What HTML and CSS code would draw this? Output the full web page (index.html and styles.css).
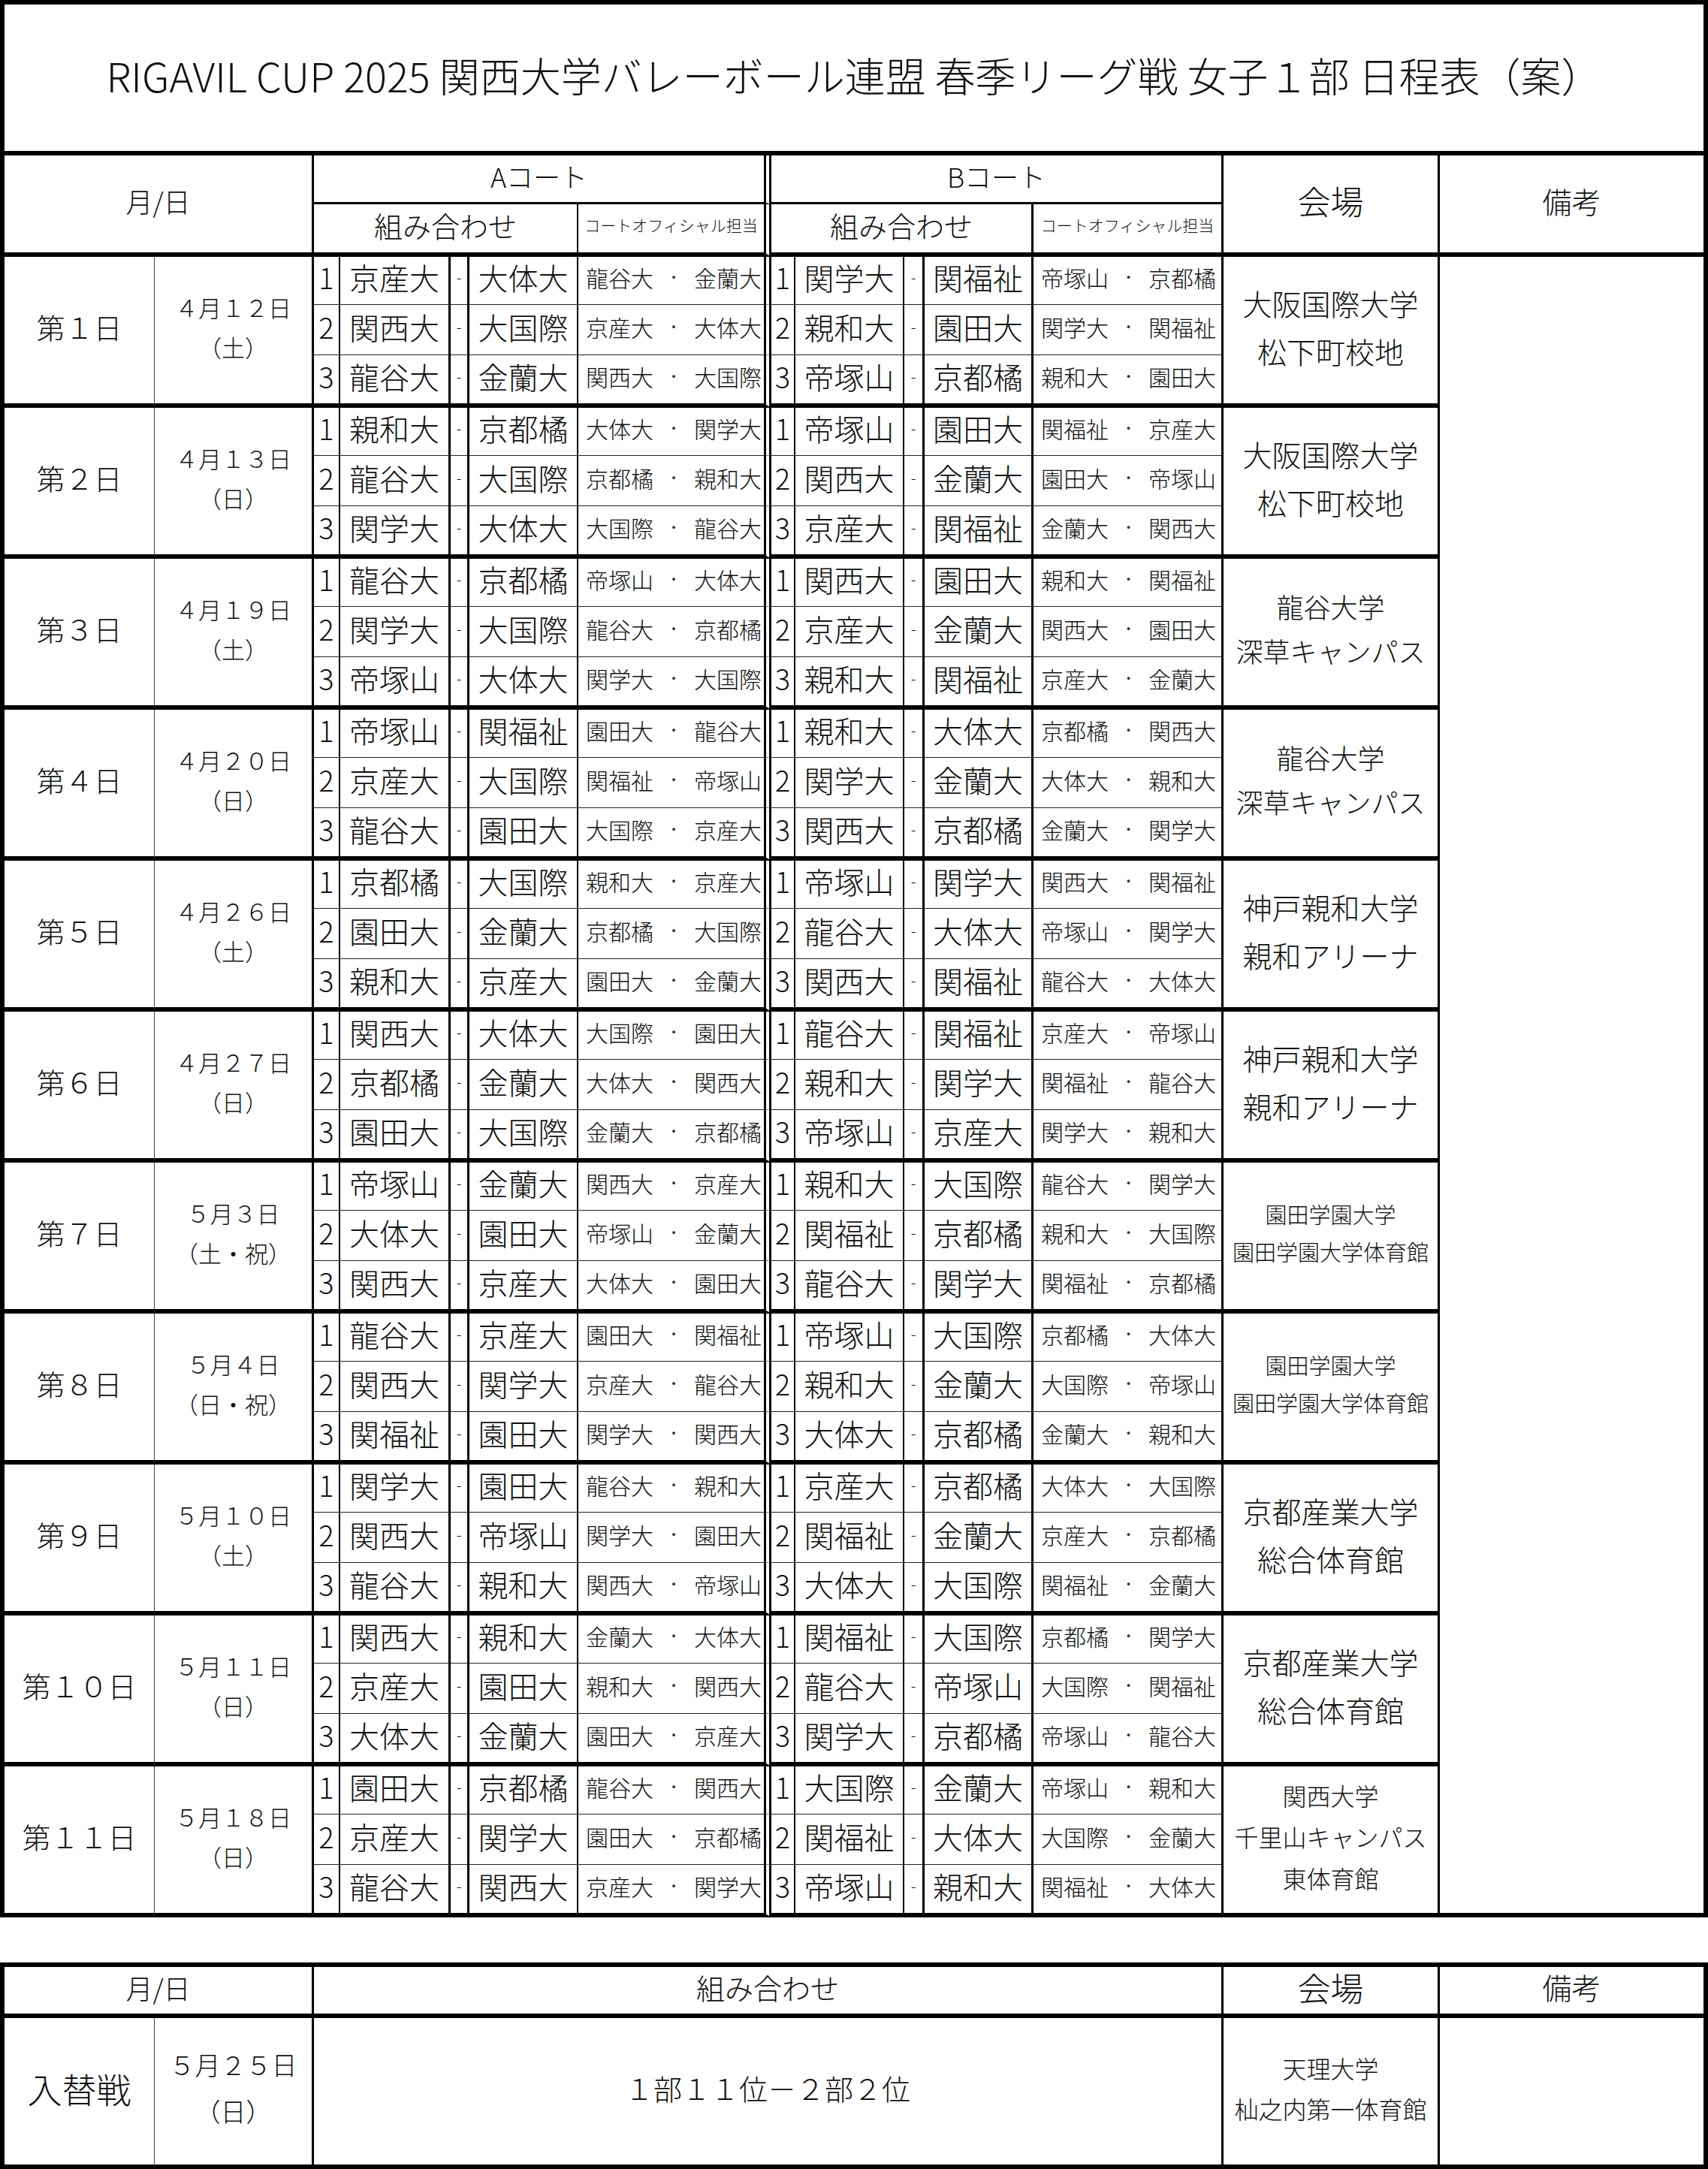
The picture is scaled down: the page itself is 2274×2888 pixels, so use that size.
FILE: index.html
```html
<!DOCTYPE html>
<html lang="ja">
<head>
<meta charset="utf-8">
<title>RIGAVIL CUP 2025 日程表</title>
<link rel="stylesheet" href="styles.css">
</head>
<body>
<div class="page">
  <div class="sheet">
    <div class="title">RIGAVIL CUP 2025 関西大学バレーボール連盟 春季リーグ戦 女子１部 日程表（案）</div>
    <div class="grid">
      <div class="h-date">月/日</div>
      <div class="h-a">Aコート</div>
      <div class="h-b">Bコート</div>
      <div class="h-venue">会場</div>
      <div class="h-note">備考</div>
      <div class="h-ca">組み合わせ</div>
      <div class="h-oa">コートオフィシャル担当</div>
      <div class="h-cb">組み合わせ</div>
      <div class="h-ob">コートオフィシャル担当</div>

      <div class="day">
        <div class="lbl">第１日</div>
        <div class="date">４月１２日<br>（土）</div>
        <div class="m"><span>1</span><span>京産大</span><span>-</span><span>大体大</span><span class="o"><span>龍谷大</span><span class="dot">・</span><span>金蘭大</span></span><span>1</span><span>関学大</span><span>-</span><span>関福祉</span><span class="o"><span>帝塚山</span><span class="dot">・</span><span>京都橘</span></span></div>
        <div class="venue">大阪国際大学<br>松下町校地</div>
        <div class="note"></div>
        <div class="m"><span>2</span><span>関西大</span><span>-</span><span>大国際</span><span class="o"><span>京産大</span><span class="dot">・</span><span>大体大</span></span><span>2</span><span>親和大</span><span>-</span><span>園田大</span><span class="o"><span>関学大</span><span class="dot">・</span><span>関福祉</span></span></div>
        <div class="m z"><span>3</span><span>龍谷大</span><span>-</span><span>金蘭大</span><span class="o"><span>関西大</span><span class="dot">・</span><span>大国際</span></span><span>3</span><span>帝塚山</span><span>-</span><span>京都橘</span><span class="o"><span>親和大</span><span class="dot">・</span><span>園田大</span></span></div>
      </div>

      <div class="day">
        <div class="lbl">第２日</div>
        <div class="date">４月１３日<br>（日）</div>
        <div class="m"><span>1</span><span>親和大</span><span>-</span><span>京都橘</span><span class="o"><span>大体大</span><span class="dot">・</span><span>関学大</span></span><span>1</span><span>帝塚山</span><span>-</span><span>園田大</span><span class="o"><span>関福祉</span><span class="dot">・</span><span>京産大</span></span></div>
        <div class="venue">大阪国際大学<br>松下町校地</div>
        <div class="m"><span>2</span><span>龍谷大</span><span>-</span><span>大国際</span><span class="o"><span>京都橘</span><span class="dot">・</span><span>親和大</span></span><span>2</span><span>関西大</span><span>-</span><span>金蘭大</span><span class="o"><span>園田大</span><span class="dot">・</span><span>帝塚山</span></span></div>
        <div class="m z"><span>3</span><span>関学大</span><span>-</span><span>大体大</span><span class="o"><span>大国際</span><span class="dot">・</span><span>龍谷大</span></span><span>3</span><span>京産大</span><span>-</span><span>関福祉</span><span class="o"><span>金蘭大</span><span class="dot">・</span><span>関西大</span></span></div>
      </div>

      <div class="day">
        <div class="lbl">第３日</div>
        <div class="date">４月１９日<br>（土）</div>
        <div class="m"><span>1</span><span>龍谷大</span><span>-</span><span>京都橘</span><span class="o"><span>帝塚山</span><span class="dot">・</span><span>大体大</span></span><span>1</span><span>関西大</span><span>-</span><span>園田大</span><span class="o"><span>親和大</span><span class="dot">・</span><span>関福祉</span></span></div>
        <div class="venue sm">龍谷大学<br>深草キャンパス</div>
        <div class="m"><span>2</span><span>関学大</span><span>-</span><span>大国際</span><span class="o"><span>龍谷大</span><span class="dot">・</span><span>京都橘</span></span><span>2</span><span>京産大</span><span>-</span><span>金蘭大</span><span class="o"><span>関西大</span><span class="dot">・</span><span>園田大</span></span></div>
        <div class="m z"><span>3</span><span>帝塚山</span><span>-</span><span>大体大</span><span class="o"><span>関学大</span><span class="dot">・</span><span>大国際</span></span><span>3</span><span>親和大</span><span>-</span><span>関福祉</span><span class="o"><span>京産大</span><span class="dot">・</span><span>金蘭大</span></span></div>
      </div>

      <div class="day">
        <div class="lbl">第４日</div>
        <div class="date">４月２０日<br>（日）</div>
        <div class="m"><span>1</span><span>帝塚山</span><span>-</span><span>関福祉</span><span class="o"><span>園田大</span><span class="dot">・</span><span>龍谷大</span></span><span>1</span><span>親和大</span><span>-</span><span>大体大</span><span class="o"><span>京都橘</span><span class="dot">・</span><span>関西大</span></span></div>
        <div class="venue sm">龍谷大学<br>深草キャンパス</div>
        <div class="m"><span>2</span><span>京産大</span><span>-</span><span>大国際</span><span class="o"><span>関福祉</span><span class="dot">・</span><span>帝塚山</span></span><span>2</span><span>関学大</span><span>-</span><span>金蘭大</span><span class="o"><span>大体大</span><span class="dot">・</span><span>親和大</span></span></div>
        <div class="m z"><span>3</span><span>龍谷大</span><span>-</span><span>園田大</span><span class="o"><span>大国際</span><span class="dot">・</span><span>京産大</span></span><span>3</span><span>関西大</span><span>-</span><span>京都橘</span><span class="o"><span>金蘭大</span><span class="dot">・</span><span>関学大</span></span></div>
      </div>

      <div class="day">
        <div class="lbl">第５日</div>
        <div class="date">４月２６日<br>（土）</div>
        <div class="m"><span>1</span><span>京都橘</span><span>-</span><span>大国際</span><span class="o"><span>親和大</span><span class="dot">・</span><span>京産大</span></span><span>1</span><span>帝塚山</span><span>-</span><span>関学大</span><span class="o"><span>関西大</span><span class="dot">・</span><span>関福祉</span></span></div>
        <div class="venue">神戸親和大学<br>親和アリーナ</div>
        <div class="m"><span>2</span><span>園田大</span><span>-</span><span>金蘭大</span><span class="o"><span>京都橘</span><span class="dot">・</span><span>大国際</span></span><span>2</span><span>龍谷大</span><span>-</span><span>大体大</span><span class="o"><span>帝塚山</span><span class="dot">・</span><span>関学大</span></span></div>
        <div class="m z"><span>3</span><span>親和大</span><span>-</span><span>京産大</span><span class="o"><span>園田大</span><span class="dot">・</span><span>金蘭大</span></span><span>3</span><span>関西大</span><span>-</span><span>関福祉</span><span class="o"><span>龍谷大</span><span class="dot">・</span><span>大体大</span></span></div>
      </div>

      <div class="day">
        <div class="lbl">第６日</div>
        <div class="date">４月２７日<br>（日）</div>
        <div class="m"><span>1</span><span>関西大</span><span>-</span><span>大体大</span><span class="o"><span>大国際</span><span class="dot">・</span><span>園田大</span></span><span>1</span><span>龍谷大</span><span>-</span><span>関福祉</span><span class="o"><span>京産大</span><span class="dot">・</span><span>帝塚山</span></span></div>
        <div class="venue">神戸親和大学<br>親和アリーナ</div>
        <div class="m"><span>2</span><span>京都橘</span><span>-</span><span>金蘭大</span><span class="o"><span>大体大</span><span class="dot">・</span><span>関西大</span></span><span>2</span><span>親和大</span><span>-</span><span>関学大</span><span class="o"><span>関福祉</span><span class="dot">・</span><span>龍谷大</span></span></div>
        <div class="m z"><span>3</span><span>園田大</span><span>-</span><span>大国際</span><span class="o"><span>金蘭大</span><span class="dot">・</span><span>京都橘</span></span><span>3</span><span>帝塚山</span><span>-</span><span>京産大</span><span class="o"><span>関学大</span><span class="dot">・</span><span>親和大</span></span></div>
      </div>

      <div class="day">
        <div class="lbl">第７日</div>
        <div class="date">５月３日<br>（土・祝）</div>
        <div class="m"><span>1</span><span>帝塚山</span><span>-</span><span>金蘭大</span><span class="o"><span>関西大</span><span class="dot">・</span><span>京産大</span></span><span>1</span><span>親和大</span><span>-</span><span>大国際</span><span class="o"><span>龍谷大</span><span class="dot">・</span><span>関学大</span></span></div>
        <div class="venue xs">園田学園大学<br>園田学園大学体育館</div>
        <div class="m"><span>2</span><span>大体大</span><span>-</span><span>園田大</span><span class="o"><span>帝塚山</span><span class="dot">・</span><span>金蘭大</span></span><span>2</span><span>関福祉</span><span>-</span><span>京都橘</span><span class="o"><span>親和大</span><span class="dot">・</span><span>大国際</span></span></div>
        <div class="m z"><span>3</span><span>関西大</span><span>-</span><span>京産大</span><span class="o"><span>大体大</span><span class="dot">・</span><span>園田大</span></span><span>3</span><span>龍谷大</span><span>-</span><span>関学大</span><span class="o"><span>関福祉</span><span class="dot">・</span><span>京都橘</span></span></div>
      </div>

      <div class="day">
        <div class="lbl">第８日</div>
        <div class="date">５月４日<br>（日・祝）</div>
        <div class="m"><span>1</span><span>龍谷大</span><span>-</span><span>京産大</span><span class="o"><span>園田大</span><span class="dot">・</span><span>関福祉</span></span><span>1</span><span>帝塚山</span><span>-</span><span>大国際</span><span class="o"><span>京都橘</span><span class="dot">・</span><span>大体大</span></span></div>
        <div class="venue xs">園田学園大学<br>園田学園大学体育館</div>
        <div class="m"><span>2</span><span>関西大</span><span>-</span><span>関学大</span><span class="o"><span>京産大</span><span class="dot">・</span><span>龍谷大</span></span><span>2</span><span>親和大</span><span>-</span><span>金蘭大</span><span class="o"><span>大国際</span><span class="dot">・</span><span>帝塚山</span></span></div>
        <div class="m z"><span>3</span><span>関福祉</span><span>-</span><span>園田大</span><span class="o"><span>関学大</span><span class="dot">・</span><span>関西大</span></span><span>3</span><span>大体大</span><span>-</span><span>京都橘</span><span class="o"><span>金蘭大</span><span class="dot">・</span><span>親和大</span></span></div>
      </div>

      <div class="day">
        <div class="lbl">第９日</div>
        <div class="date">５月１０日<br>（土）</div>
        <div class="m"><span>1</span><span>関学大</span><span>-</span><span>園田大</span><span class="o"><span>龍谷大</span><span class="dot">・</span><span>親和大</span></span><span>1</span><span>京産大</span><span>-</span><span>京都橘</span><span class="o"><span>大体大</span><span class="dot">・</span><span>大国際</span></span></div>
        <div class="venue">京都産業大学<br>総合体育館</div>
        <div class="m"><span>2</span><span>関西大</span><span>-</span><span>帝塚山</span><span class="o"><span>関学大</span><span class="dot">・</span><span>園田大</span></span><span>2</span><span>関福祉</span><span>-</span><span>金蘭大</span><span class="o"><span>京産大</span><span class="dot">・</span><span>京都橘</span></span></div>
        <div class="m z"><span>3</span><span>龍谷大</span><span>-</span><span>親和大</span><span class="o"><span>関西大</span><span class="dot">・</span><span>帝塚山</span></span><span>3</span><span>大体大</span><span>-</span><span>大国際</span><span class="o"><span>関福祉</span><span class="dot">・</span><span>金蘭大</span></span></div>
      </div>

      <div class="day">
        <div class="lbl">第１０日</div>
        <div class="date">５月１１日<br>（日）</div>
        <div class="m"><span>1</span><span>関西大</span><span>-</span><span>親和大</span><span class="o"><span>金蘭大</span><span class="dot">・</span><span>大体大</span></span><span>1</span><span>関福祉</span><span>-</span><span>大国際</span><span class="o"><span>京都橘</span><span class="dot">・</span><span>関学大</span></span></div>
        <div class="venue">京都産業大学<br>総合体育館</div>
        <div class="m"><span>2</span><span>京産大</span><span>-</span><span>園田大</span><span class="o"><span>親和大</span><span class="dot">・</span><span>関西大</span></span><span>2</span><span>龍谷大</span><span>-</span><span>帝塚山</span><span class="o"><span>大国際</span><span class="dot">・</span><span>関福祉</span></span></div>
        <div class="m z"><span>3</span><span>大体大</span><span>-</span><span>金蘭大</span><span class="o"><span>園田大</span><span class="dot">・</span><span>京産大</span></span><span>3</span><span>関学大</span><span>-</span><span>京都橘</span><span class="o"><span>帝塚山</span><span class="dot">・</span><span>龍谷大</span></span></div>
      </div>

      <div class="day">
        <div class="lbl">第１１日</div>
        <div class="date">５月１８日<br>（日）</div>
        <div class="m"><span>1</span><span>園田大</span><span>-</span><span>京都橘</span><span class="o"><span>龍谷大</span><span class="dot">・</span><span>関西大</span></span><span>1</span><span>大国際</span><span>-</span><span>金蘭大</span><span class="o"><span>帝塚山</span><span class="dot">・</span><span>親和大</span></span></div>
        <div class="venue ks">関西大学<br>千里山キャンパス<br>東体育館</div>
        <div class="m"><span>2</span><span>京産大</span><span>-</span><span>関学大</span><span class="o"><span>園田大</span><span class="dot">・</span><span>京都橘</span></span><span>2</span><span>関福祉</span><span>-</span><span>大体大</span><span class="o"><span>大国際</span><span class="dot">・</span><span>金蘭大</span></span></div>
        <div class="m z"><span>3</span><span>龍谷大</span><span>-</span><span>関西大</span><span class="o"><span>京産大</span><span class="dot">・</span><span>関学大</span></span><span>3</span><span>帝塚山</span><span>-</span><span>親和大</span><span class="o"><span>関福祉</span><span class="dot">・</span><span>大体大</span></span></div>
      </div>
    </div>
  </div>

  <div class="sheet sheet-2">
    <div class="grid grid-2">
      <div class="x-date">月/日</div>
      <div class="x-match">組み合わせ</div>
      <div class="x-venue">会場</div>
      <div class="x-note">備考</div>

      <div class="y-lbl">入替戦</div>
      <div class="y-date">５月２５日<br>（日）</div>
      <div class="y-match">１部１１位－２部２位</div>
      <div class="y-venue">天理大学<br>杣之内第一体育館</div>
      <div class="y-note"></div>
    </div>
  </div>
</div>
</body>
</html>
```

FILE: styles.css
```css
* {
  box-sizing: border-box;
}

body {
  margin: 0;
  background: #fff;
  color: #111;
  font-family: "Noto Sans CJK JP", "Noto Sans", sans-serif;
  font-weight: 300;
}

.page {
  width: 2274px;
}

.sheet {
  border: 6px solid #000;
  border-bottom: 0;
}

.sheet-2 {
  margin-top: 60px;
}

.title {
  height: 201px;
  border-bottom: 6px solid #000;
  display: flex;
  align-items: center;
  justify-content: center;
  font-size: 54px;
  line-height: 1;
  padding-bottom: 8px;
}

.grid {
  display: grid;
  grid-template-columns: 200px 212px 35px 147px 25px 145px 257px 32px 145px 27px 145px 253px 288px 351px;
  grid-template-rows: 65px 70px repeat(11, 64px 67px 70px);
}

.grid-2 {
  grid-template-rows: 68px 201px;
}

.day,
.m {
  display: contents;
}

/* every grid cell */
.grid > div:not(.day),
.day > div:not(.m),
.m > span {
  display: flex;
  align-items: center;
  justify-content: center;
  text-align: center;
  line-height: 1;
  background: #fff;
  white-space: nowrap;
  padding-bottom: 9px;
}

/* ---------- header ---------- */
.h-date {
  grid-column: 1 / 3;
  grid-row: span 2;
  border-right: 3px solid #000;
  border-bottom: 6px solid #000;
  font-size: 36px;
}

.h-a {
  grid-column: 3 / 8;
  border-right: 10px double #000;
  border-bottom: 3px solid #000;
  font-size: 36px;
}

.h-b {
  grid-column: 8 / 13;
  border-right: 3px solid #000;
  border-bottom: 3px solid #000;
  font-size: 36px;
}

.h-venue {
  grid-column: 13;
  grid-row: span 2;
  border-right: 3px solid #000;
  border-bottom: 6px solid #000;
  font-size: 44px;
}

.h-note {
  grid-column: 14;
  grid-row: span 2;
  border-bottom: 6px solid #000;
  font-size: 39px;
}

.h-ca,
.h-cb,
.h-oa,
.h-ob {
  border-bottom: 6px solid #000;
}

.h-ca {
  grid-column: 3 / 7;
  border-right: 2px solid #000;
  font-size: 38px;
}

.h-oa {
  grid-column: 7;
  border-right: 10px double #000;
  font-size: 21px;
}

.h-cb {
  grid-column: 8 / 12;
  border-right: 3px solid #000;
  font-size: 38px;
}

.h-ob {
  grid-column: 12;
  border-right: 3px solid #000;
  font-size: 21px;
}

/* ---------- day blocks ---------- */
.lbl {
  grid-column: 1;
  grid-row: span 3;
  border-right: 1px solid #444;
  border-bottom: 6px solid #000;
  font-size: 38px;
}

.date {
  grid-column: 2;
  grid-row: span 3;
  border-right: 3px solid #000;
  border-bottom: 6px solid #000;
  font-size: 31px;
  line-height: 53px !important;
}

.venue {
  grid-column: 13;
  grid-row: span 3;
  border-right: 3px solid #000;
  border-bottom: 6px solid #000;
  font-size: 39px;
  line-height: 64px !important;
}

.venue.sm {
  font-size: 36px;
  line-height: 59px !important;
}

.venue.xs {
  font-size: 29px;
  line-height: 50px !important;
}

.venue.ks {
  font-size: 32px;
  line-height: 55px !important;
}

.note {
  grid-column: 14;
  grid-row: span 33;
  border-bottom: 6px solid #000;
}

/* match rows */
.m > span {
  border-bottom: 1px solid #222;
}

.m.z > span {
  border-bottom: 6px solid #000;
}

.m > span:nth-child(1) {
  grid-column: 3;
  border-right: 2px solid #000;
  font-size: 38px;
}

.m > span:nth-child(2) {
  grid-column: 4;
  border-right: 3px solid #000;
  font-size: 40px;
}

.m > span:nth-child(3) {
  grid-column: 5;
  border-right: 3px solid #000;
  font-size: 20px;
}

.m > span:nth-child(4) {
  grid-column: 6;
  border-right: 2px solid #000;
  font-size: 40px;
}

.m > span:nth-child(5) {
  grid-column: 7;
  border-right: 10px double #000;
  font-size: 30px;
  justify-content: space-between;
  padding: 0 3px 9px 10px;
}

.m > span:nth-child(6) {
  grid-column: 8;
  border-right: 2px solid #000;
  font-size: 38px;
}

.m > span:nth-child(7) {
  grid-column: 9;
  border-right: 2px solid #000;
  font-size: 40px;
}

.m > span:nth-child(8) {
  grid-column: 10;
  border-right: 3px solid #000;
  font-size: 20px;
}

.m > span:nth-child(9) {
  grid-column: 11;
  border-right: 3px solid #000;
  font-size: 40px;
}

.m > span:nth-child(10) {
  grid-column: 12;
  border-right: 3px solid #000;
  font-size: 30px;
  justify-content: space-between;
  padding: 0 7px 9px 10px;
}

.o .dot {
  font-size: 20px;
  color: #333;
}

/* ---------- replacement match table ---------- */
.x-date,
.x-match,
.x-venue,
.x-note {
  border-bottom: 6px solid #000;
}

.x-date {
  grid-column: 1 / 3;
  border-right: 3px solid #000;
  font-size: 36px;
}

.x-match {
  grid-column: 3 / 13;
  border-right: 3px solid #000;
  font-size: 38px;
}

.x-venue {
  grid-column: 13;
  border-right: 3px solid #000;
  font-size: 44px;
}

.x-note {
  grid-column: 14;
  font-size: 39px;
}

.y-lbl,
.y-date,
.y-match,
.y-venue,
.y-note {
  border-bottom: 6px solid #000;
}

.y-lbl {
  grid-column: 1;
  border-right: 1px solid #444;
  font-size: 46px;
}

.y-date {
  grid-column: 2;
  border-right: 3px solid #000;
  font-size: 34px;
  line-height: 62px !important;
}

.y-match {
  grid-column: 3 / 13;
  border-right: 3px solid #000;
  font-size: 38px;
}

.y-venue {
  grid-column: 13;
  border-right: 3px solid #000;
  font-size: 32px;
  line-height: 54px !important;
}

.y-note {
  grid-column: 14;
}
```
